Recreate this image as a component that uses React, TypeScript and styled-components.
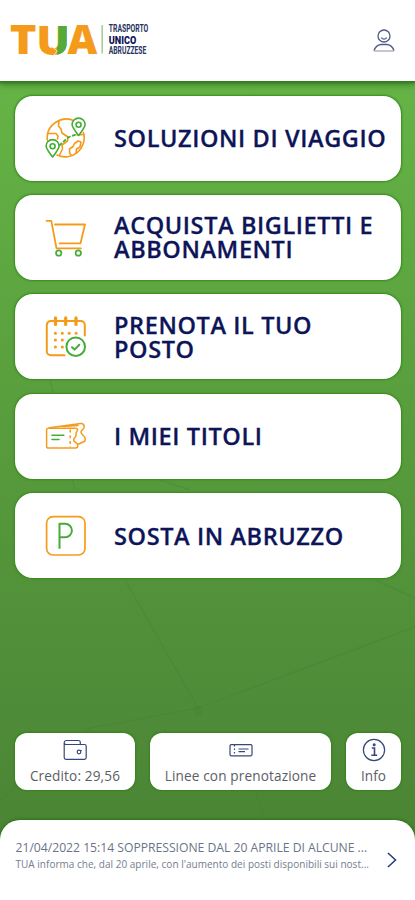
import React from 'react';
import styled, { createGlobalStyle } from 'styled-components';

const ORANGE = '#f59b1c';
const GREEN = '#45ad35';
const NAVY = '#0d1558';

const GlobalStyle = createGlobalStyle`
  *, *::before, *::after { box-sizing: border-box; }
  html, body { margin: 0; padding: 0; }
  body { font-family: "Open Sans", "Noto Sans", sans-serif; }
  button { font: inherit; border: 0; padding: 0; margin: 0; background: none; }
`;

const Screen = styled.div`
  position: relative;
  isolation: isolate;
  width: 100%;
  max-width: 415px;
  height: 900px;
  margin: 0 auto;
  overflow: hidden;
  display: flex;
  flex-direction: column;
  background: linear-gradient(180deg, #65b446 80px, #5da640 290px, #529239 590px, #4f8c39 700px, #4b8534 830px);
`;

const Network = styled.svg`
  position: absolute;
  inset: 0;
  z-index: -1;
`;

const Header = styled.header`
  flex: none;
  height: 81px;
  padding: 0 20px 0 0;
  display: flex;
  justify-content: space-between;
  background: #fff;
  box-shadow: 0 1px 2px 1px #337c20, 0 3px 7px rgba(26, 76, 18, 0.6);
`;

const Logo = styled.svg`
  display: block;
`;

const ProfileButton = styled.button`
  display: block;
  height: 24px;
  margin-top: 29px;
`;

const Menu = styled.nav`
  flex: none;
  display: flex;
  flex-direction: column;
  gap: 14.4px;
  padding: 14.6px 14.3px 0 15px;
`;

const MenuCard = styled.button`
  height: 85px;
  display: flex;
  align-items: center;
  padding-left: 30px;
  border-radius: 18px;
  background: #fff;
  box-shadow: 0 0 2px 0.5px #39891f;
  text-align: left;
`;

const MenuIcon = styled.svg`
  flex: none;
  width: 42px;
  height: 42px;
  margin-right: 27px;
  fill: none;
  stroke-linecap: round;
  stroke-linejoin: round;
`;

const MenuLabel = styled.span`
  color: ${NAVY};
  font-size: 23.5px;
  font-weight: 600;
  -webkit-text-stroke: 0.3px ${NAVY};
  line-height: 24px;
  letter-spacing: 0.61px;
  white-space: pre-line;
`;

const Shortcuts = styled.div`
  flex: none;
  display: grid;
  grid-template-columns: 120px 181px 55px;
  gap: 15px;
  margin: auto 14px 29.5px 15px;
`;

const Shortcut = styled.button`
  height: 57px;
  display: flex;
  flex-direction: column;
  align-items: center;
  border-radius: 12px;
  background: #fff;
  box-shadow: 0 0 2px 0.5px #39801f;
`;

const ShortcutIcon = styled.svg`
  flex: none;
  width: 24px;
  height: 24px;
  margin-top: 5px;
  fill: none;
  stroke: #364878;
  stroke-width: 1.2;
`;

const ShortcutLabel = styled.span<{ $spacing: number }>`
  margin-top: 3.5px;
  color: #5c5e66;
  font-size: 13.6px;
  line-height: 20px;
  letter-spacing: ${(p) => p.$spacing}px;
  white-space: nowrap;
`;

const NewsSheet = styled.footer`
  flex: none;
  height: 80.5px;
  display: flex;
  justify-content: space-between;
  padding: 18px 17px 0 15.5px;
  border-radius: 20px 20px 0 0;
  background: #fff;
  box-shadow: 0 0 3px 1px #2c721a;
`;

const NewsText = styled.div`
  width: 358px;
`;

const NewsTitle = styled.div`
  color: #6a7488;
  font-size: 12.2px;
  line-height: 19px;
  letter-spacing: -0.02px;
  white-space: nowrap;
`;

const NewsSummary = styled.div`
  color: #747d8e;
  font-size: 10px;
  line-height: 15px;
  letter-spacing: 0.02px;
  white-space: nowrap;
`;

const Chevron = styled.svg`
  flex: none;
  margin-top: 13px;
`;

const TuaLogo = () => (
  <Logo width="160" height="81" viewBox="0 0 160 81" fontFamily='"Open Sans", sans-serif'>
    <defs>
      <clipPath id="uRight"><path d="M57 20H70V60H57Z" /></clipPath>
    </defs>
    <g fontSize="40" fontWeight="800" fill={ORANGE}>
      <text x="9.8" y="54" textLength="26.8" lengthAdjust="spacingAndGlyphs">T</text>
      <g>
        <text x="36.2" y="54.6" textLength="33.6" lengthAdjust="spacingAndGlyphs">U</text>
        <text x="36.2" y="54.6" textLength="33.6" lengthAdjust="spacingAndGlyphs" fill="#55aa38" clipPath="url(#uRight)">U</text>
      </g>
      <text x="67.5" y="54" textLength="29.8" lengthAdjust="spacingAndGlyphs">A</text>
    </g>
    <path d="M51.5 46.5 57.2 51 52.5 55.8" fill={ORANGE} />
    <path d="M52 46.5 57.3 51 53 56" fill="none" stroke="#fff" strokeWidth="0.7" />
    <path d="M102.2 25V53.5" stroke="#a5cf9b" strokeWidth="1.6" />
    <g fontSize="10" fill="#26335f" fontFamily="Roboto, sans-serif">
      <text x="108.8" y="32.4" textLength="39.5" lengthAdjust="spacingAndGlyphs" fontWeight="700">TRASPORTO</text>
      <text x="108.8" y="43.6" textLength="27.5" lengthAdjust="spacingAndGlyphs" fontWeight="900" fill={NAVY}>UNICO</text>
      <text x="108.8" y="54" textLength="37.5" lengthAdjust="spacingAndGlyphs" fontWeight="700">ABRUZZESE</text>
    </g>
  </Logo>
);

const GlobeIcon = () => (
  <MenuIcon viewBox="0 0 42 42" strokeWidth="1.6">
    <g stroke={ORANGE}>
      <path d="M30 4.2A19 19 0 0 0 2.4 23.5M12 38A19 19 0 0 0 38.4 15.5" />
      <path d="M3 16.5H11L13 19 12.5 22M14 3.5 13.5 9 16 12 17 16 23 20 22.5 24 17 28 17.5 32 14.5 38" />
      <path d="M26.5 38.5 24.5 36 24.5 32 28 29.5 29.5 26.5 33 24 36 25 35 30 31.5 32 31 36M39 17.5 32 18" />
    </g>
    <path d="M30 17.8 23 20.5 11.5 31" stroke={GREEN} strokeWidth="1.8" strokeDasharray="2.5 3" />
    <g stroke={GREEN} fill="#fff">
      <path d="M33.6 18.5C30 13.5 27.1 10.5 27.1 7.6A6.5 6.5 0 0 1 40.1 7.6C40.1 10.5 37.2 13.5 33.6 18.5Z" />
      <path d="M7.6 40C4 35 1.1 32 1.1 29.1A6.5 6.5 0 0 1 14.1 29.1C14.1 32 11.2 35 7.6 40Z" />
      <circle cx="33.6" cy="7.8" r="2.5" />
      <circle cx="7.6" cy="29.3" r="2.5" />
    </g>
  </MenuIcon>
);

const CartIcon = () => (
  <MenuIcon viewBox="0 0 42 42" strokeWidth="1.8">
    <path d="M1.6 4.8H6.3L11.5 32.3H36M10 8.5H40L35.5 27.3H14.5" stroke={ORANGE} />
    <g stroke={GREEN} strokeWidth="1.7">
      <circle cx="13.7" cy="37" r="2.7" />
      <circle cx="33.3" cy="37" r="2.7" />
    </g>
  </MenuIcon>
);

const CalendarIcon = () => (
  <MenuIcon viewBox="0 0 42 42" strokeWidth="2">
    <path d="M19.5 39.3H5.8A4 4 0 0 1 1.8 35.3V9A4 4 0 0 1 5.8 5H35.8A4 4 0 0 1 39.8 9V19.5" stroke={ORANGE} />
    <path d="M10.5 1.8V8.5M20.7 1.8V8.5M31 1.8V8.5" stroke={ORANGE} strokeWidth="3.2" />
    <path d="M10.4 17.2h.01M17.3 17.2h.01M24.2 17.2h.01M31.1 17.2h.01M10.4 24h.01M17.3 24h.01M10.4 31h.01M17.3 31h.01" stroke={ORANGE} strokeWidth="3.1" />
    <circle cx="30.7" cy="30.7" r="9.3" stroke={GREEN} fill="#fff" />
    <path d="M27 31.2 29.6 33.6 34.3 28.8" stroke={GREEN} />
  </MenuIcon>
);

const TicketsIcon = () => (
  <MenuIcon viewBox="0 0 42 42" strokeWidth="1.5">
    <g stroke={ORANGE}>
      <path d="M3.3 13.2H30.5C33 13.2 33 15 31.8 16.5 30 18.5 31.5 20 31 21 30 22.2 28.2 23.5 28.8 25.5 29.4 27.5 32.5 28 32.8 30V30.8C32.8 32.2 32 33.1 30.6 33.1H3.3A1.7 1.7 0 0 1 1.6 31.4V14.9A1.7 1.7 0 0 1 3.3 13.2Z" />
      <path d="M4.5 12.8 35.8 8.6C38 8.3 39.2 9.8 39.2 12 39 14.5 36.3 14.7 36 17.1 35.7 19.8 40.2 20.6 40.2 23.6L39.8 26.3 33 29.2M18 11.5 33 10.5" />
      <path d="M25.2 14.5V32" strokeDasharray="3 2.7" strokeLinecap="butt" />
    </g>
    <path d="M7 20.2H18.8M7 24.5H14" stroke={GREEN} strokeWidth="1.6" />
  </MenuIcon>
);

const ParkingIcon = () => (
  <MenuIcon viewBox="0 0 42 42" strokeWidth="1.7">
    <rect x="1.6" y="1.6" width="38.4" height="38.4" rx="6.5" stroke={ORANGE} />
    <path d="M14.5 33.8V8.8H20.2A6.7 6.7 0 0 1 20.2 22.2H14.5" stroke={GREEN} strokeWidth="2" strokeLinecap="butt" />
  </MenuIcon>
);

const WalletIcon = () => (
  <ShortcutIcon viewBox="0 0 24 24">
    <path d="M1.2 4.7V19.5Q1.2 21.3 3 21.3H21.5Q23.2 21.3 23.2 19.6V8.2Q23.2 6.5 21.5 6.5H3Q1.2 6.3 1.2 4.6T3 2.5H15.5Q17.3 2.5 17.3 4.5V6.3" />
    <circle cx="16" cy="14" r="1.8" />
    <path d="M17 12.5H18.8" />
  </ShortcutIcon>
);

const TicketIcon = () => (
  <ShortcutIcon viewBox="0 0 24 24">
    <rect x="1" y="6.6" width="22" height="11.2" rx="1.2" />
    <path d="M5.5 7V17.5" strokeDasharray="1.5 2" />
    <path d="M9.5 11H19.5M9.5 13.6H16" />
  </ShortcutIcon>
);

const InfoIcon = () => (
  <ShortcutIcon viewBox="0 0 24 24">
    <circle cx="12" cy="12" r="10.6" />
    <path d="M9.8 10H12.5V17.2M9.3 17.3H15.2" strokeWidth="1.6" />
    <circle cx="12.2" cy="6.7" r="0.9" fill="#364878" />
  </ShortcutIcon>
);

const menu = [
  { label: 'SOLUZIONI DI VIAGGIO', Icon: GlobeIcon },
  { label: 'ACQUISTA BIGLIETTI E\nABBONAMENTI', Icon: CartIcon },
  { label: 'PRENOTA IL TUO\nPOSTO', Icon: CalendarIcon },
  { label: 'I MIEI TITOLI', Icon: TicketsIcon },
  { label: 'SOSTA IN ABRUZZO', Icon: ParkingIcon },
];

const shortcuts = [
  { label: 'Credito: 29,56', Icon: WalletIcon, spacing: 0.14 },
  { label: 'Linee con prenotazione', Icon: TicketIcon, spacing: 0.14 },
  { label: 'Info', Icon: InfoIcon, spacing: 0 },
];

export default function App() {
  return (
    <>
      <GlobalStyle />
      <Screen>
        <Network width="415" height="900" viewBox="0 0 415 900" fill="none" stroke="#3f7930" strokeOpacity="0.22" strokeWidth="1.5">
          <path d="M50 380 75 490M125 580 198 708 415 627M198 708 90 728 0 800M255 790 265 820M160 480 190 490M375 580 415 598" />
          <circle cx="198" cy="711" r="5" fill="#3f7930" fillOpacity="0.2" stroke="none" />
        </Network>
        <Header>
          <TuaLogo />
          <ProfileButton aria-label="Profilo">
            <svg width="22" height="24" viewBox="0 0 22 24" fill="none" stroke="#4e5c83" strokeWidth="1.3">
              <circle cx="11" cy="7" r="6" />
              <path d="M8.2 8.6Q11 11.5 13.8 8.6M1 21.8C2.2 17.8 5.2 15.8 8 15.5H14C16.8 15.8 19.8 17.8 21 21.8" />
              <path d="M1 22H21" stroke="#a5aab8" />
            </svg>
          </ProfileButton>
        </Header>
        <Menu>
          {menu.map(({ label, Icon }) => (
            <MenuCard key={label}>
              <Icon />
              <MenuLabel>{label}</MenuLabel>
            </MenuCard>
          ))}
        </Menu>
        <Shortcuts>
          {shortcuts.map(({ label, Icon, spacing }) => (
            <Shortcut key={label}>
              <Icon />
              <ShortcutLabel $spacing={spacing}>{label}</ShortcutLabel>
            </Shortcut>
          ))}
        </Shortcuts>
        <NewsSheet>
          <NewsText>
            <NewsTitle>21/04/2022 15:14 SOPPRESSIONE DAL 20 APRILE DI ALCUNE ...</NewsTitle>
            <NewsSummary>TUA informa che, dal 20 aprile, con l'aumento dei posti disponibili sui nost...</NewsSummary>
          </NewsText>
          <Chevron width="12" height="18" viewBox="0 0 12 18" fill="none" stroke="#26427d" strokeWidth="1.6">
            <path d="M2 2 9.5 9 2 16" />
          </Chevron>
        </NewsSheet>
      </Screen>
    </>
  );
}
